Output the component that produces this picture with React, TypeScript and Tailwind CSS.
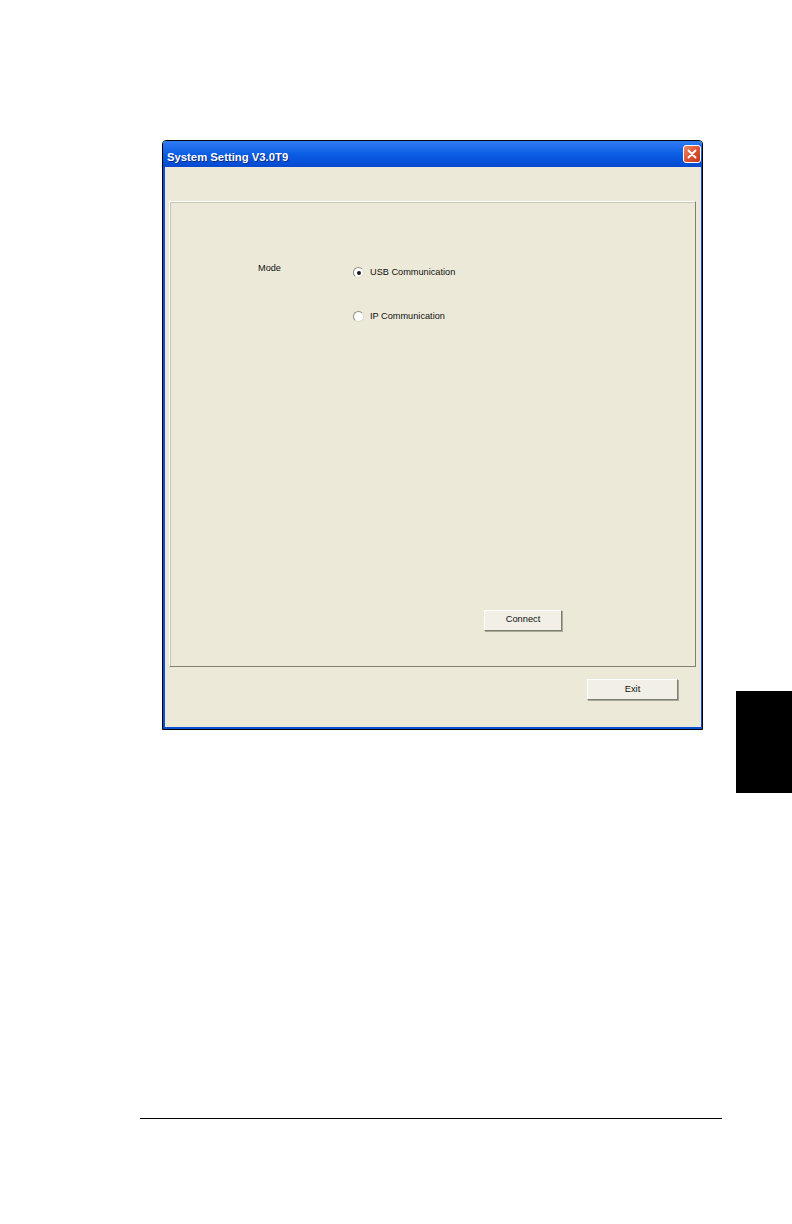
import React from "react";

const font = { fontFamily: '"Liberation Sans", Arial, sans-serif' };

function Radio({ checked }: { checked?: boolean }) {
  return (
    <span className="flex h-[11px] w-[11px] items-center justify-center rounded-full border border-t-[#8e8e80] border-l-[#8e8e80] border-r-[#dcdccc] border-b-[#dcdccc] bg-white">
      {checked ? <span className="h-[4px] w-[4px] rounded-full bg-[#1a1a1a]" /> : null}
    </span>
  );
}

function Button({ label, w }: { label: string; w: string }) {
  return (
    <div
      className={`${w} flex h-[21px] items-center justify-center border border-t-white border-l-white border-r-[#7d7d70] border-b-[#7d7d70] bg-[#f1efe6] text-[9.3px] text-[#111] shadow-[1px_1px_0_#a8a898]`}
    >
      {label}
    </div>
  );
}

export default function App() {
  return (
    <div className="relative h-[1224px] w-[792px] overflow-hidden bg-white" style={font}>
      <div className="flex pt-[140px]">
        {/* window */}
        <div className="ml-[162px] flex h-[590px] w-[541px] flex-col rounded-t-[4px] border border-black bg-[#ECE9D8]">
          {/* title bar */}
          <div className="flex h-[26px] items-center justify-between rounded-t-[3px] bg-gradient-to-b from-[#2f7bf5] via-[#0a5ee4] to-[#0549d0] pl-[4px] pr-[1px]">
            <span className="mt-[6px] text-[11.3px] font-bold text-white [text-shadow:1px_1px_0_#0b2a8a]">
              System Setting V3.0T9
            </span>
            <div className="flex h-[18px] w-[18px] items-center justify-center rounded-[3px] border border-white bg-gradient-to-br from-[#ea8a6d] via-[#dc5434] to-[#c23a1c]">
              <svg width="10" height="10" viewBox="0 0 10 10">
                <path d="M1.5 1.5 L8.5 8.5 M8.5 1.5 L1.5 8.5" stroke="white" strokeWidth="1.8" strokeLinecap="round" />
              </svg>
            </div>
          </div>
          {/* body with frame */}
          <div className="flex flex-1 flex-col border-l-[2px] border-r-[1px] border-b-[2px] border-l-[#0a4fd8] border-r-[#0a4fd8] border-b-[#0a4fd8] pl-[4px] pr-[5px]">
            {/* group panel */}
            <div className="mt-[34px] flex h-[466px] flex-col border border-t-white border-l-white border-r-[#808074] border-b-[#808074] shadow-[inset_1px_1px_0_#c8c6b4]">
              <div className="flex pl-[88px] pt-[60px] text-[9.2px] text-[#111]">
                <span className="w-[95px]">Mode</span>
                <div className="flex flex-col gap-[30px] pt-[4px]">
                  <div className="flex items-center gap-[6px]">
                    <Radio checked />
                    <span>USB Communication</span>
                  </div>
                  <div className="flex items-center gap-[6px]">
                    <Radio />
                    <span>IP Communication</span>
                  </div>
                </div>
              </div>
              <div className="ml-[314px] mt-[286px]">
                <Button label="Connect" w="w-[78px]" />
              </div>
            </div>
            <div className="mr-[18px] mt-[12px] flex justify-end">
              <Button label="Exit" w="w-[91px]" />
            </div>
          </div>
        </div>
        {/* side tab */}
        <div className="ml-[33px] mt-[551px] h-[102px] w-[56px] bg-black" />
      </div>
      <div className="ml-[140px] mt-[325px] h-[1px] w-[582px] bg-black" />
    </div>
  );
}
